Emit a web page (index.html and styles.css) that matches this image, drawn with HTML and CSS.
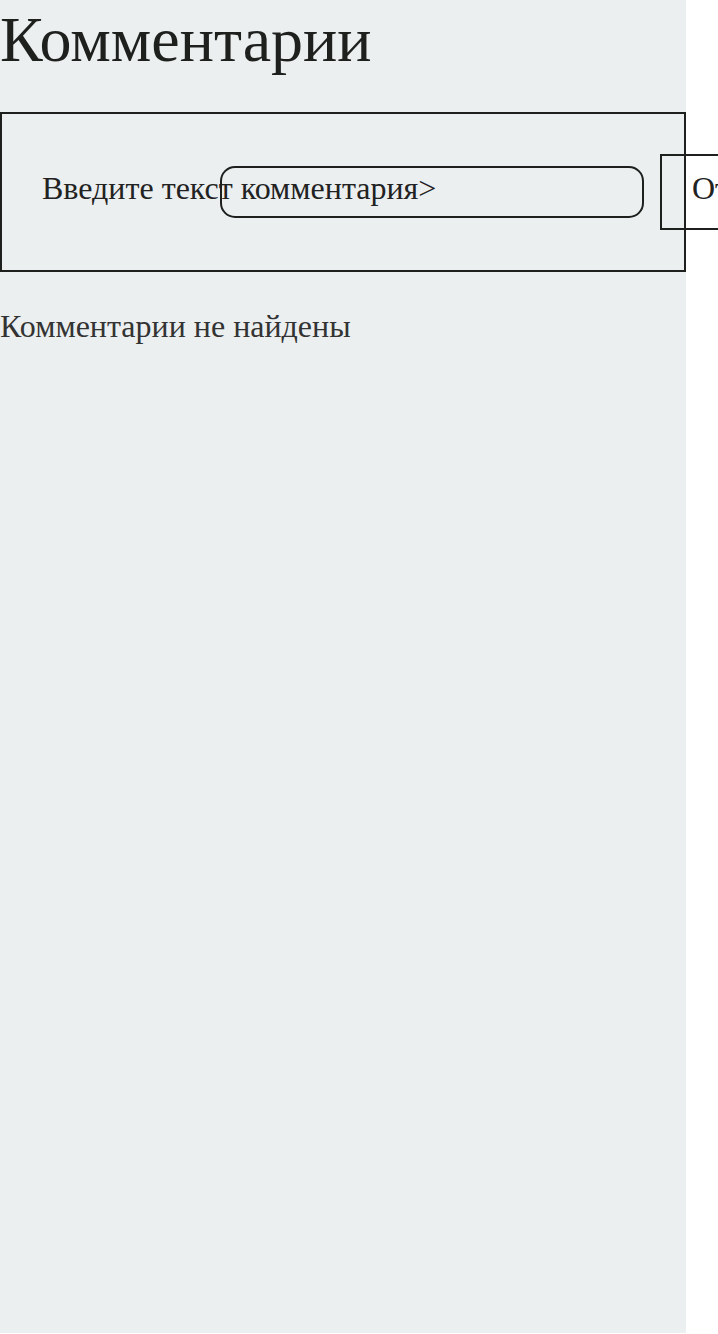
FILE: index.html
```html
<!DOCTYPE html>
<html lang="ru">
<head>
<meta charset="utf-8">
<link rel="stylesheet" href="styles.css">
</head>
<body>
<div class="page">
  <h1 class="title">Комментарии</h1>
  <form class="comment-form">
    <label class="comment-label" for="c">Введите текст комментария&gt;</label>
    <input class="comment-input" id="c" type="text">
    <button class="comment-send" type="button">Отправить</button>
  </form>
  <p class="empty">Комментарии не найдены</p>
</div>
</body>
</html>
```
FILE: styles.css
```css
html, body {
  margin: 0;
  padding: 0;
  background: #ffffff;
}
body {
  font-family: "Liberation Serif", "Times New Roman", serif;
  font-size: 32px;
  color: #222;
}
.page {
  width: 686px;
  min-height: 1333px;
  background: #ebeff0;
}
.title {
  margin: 0;
  padding-top: 0;
  font-size: 64px;
  font-weight: normal;
  line-height: 80px;
  color: #1e201e;
}
.comment-form {
  margin-top: 32px;
  box-sizing: border-box;
  width: 686px;
  height: 160px;
  border: 2px solid #1e201e;
  padding: 0 0 0 40px;
  display: flex;
  align-items: center;
}
.comment-label {
  width: 178px;
  flex: none;
  margin-bottom: 8px;
  white-space: nowrap;
  font-size: 32px;
  color: #222;
}
.comment-input {
  flex: none;
  box-sizing: border-box;
  width: 424px;
  height: 52px;
  margin: 0;
  border: 2px solid #1e201e;
  border-radius: 15px;
  background: transparent;
}
.comment-send {
  flex: none;
  box-sizing: border-box;
  margin-left: 16px;
  height: 76px;
  padding: 0 0 8px 30px;
  border: 2px solid #1e201e;
  background: transparent;
  font-family: "Liberation Serif", "Times New Roman", serif;
  font-size: 32px;
  color: #222;
  white-space: nowrap;
}
.empty {
  margin: 36px 0 0;
  font-size: 32px;
  color: #333;
}
```
